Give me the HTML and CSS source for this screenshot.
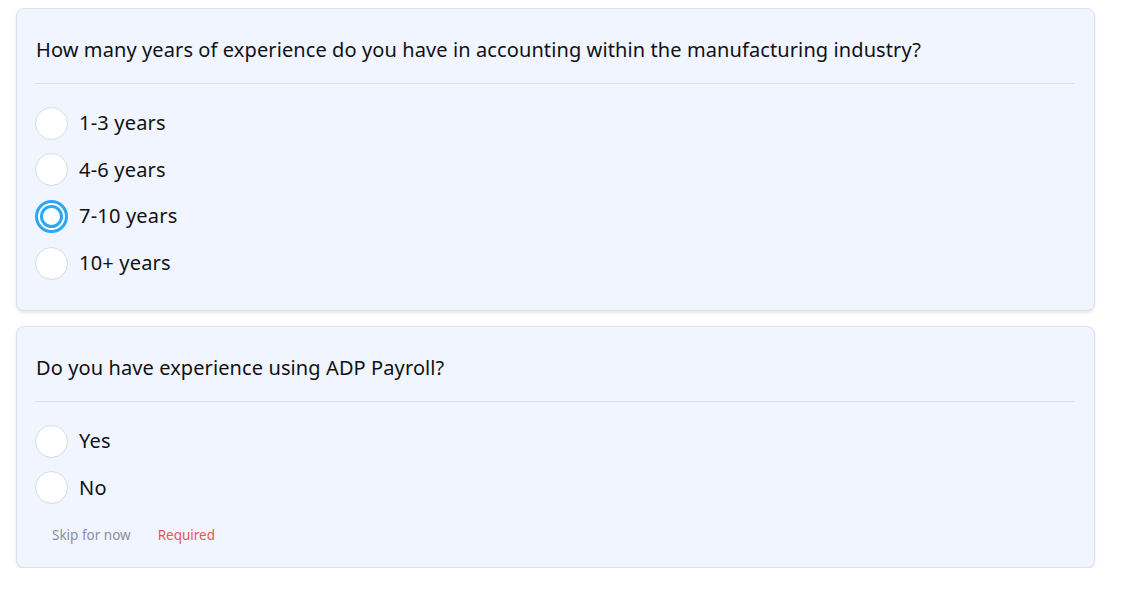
FILE: index.html
```html
<!DOCTYPE html>
<html lang="en">
<head>
<meta charset="utf-8">
<title>Questions</title>
<link rel="stylesheet" href="styles.css">
</head>
<body>
<main class="page">
  <section class="card">
    <h2 class="question">How many years of experience do you have in accounting within the manufacturing industry?</h2>
    <div class="options">
      <label class="option"><span class="radio"></span><span class="label">1-3 years</span></label>
      <label class="option"><span class="radio"></span><span class="label">4-6 years</span></label>
      <label class="option"><span class="radio checked"></span><span class="label">7-10 years</span></label>
      <label class="option"><span class="radio"></span><span class="label">10+ years</span></label>
    </div>
  </section>
  <section class="card card-footer">
    <h2 class="question">Do you have experience using ADP Payroll?</h2>
    <div class="options">
      <label class="option"><span class="radio"></span><span class="label">Yes</span></label>
      <label class="option"><span class="radio"></span><span class="label">No</span></label>
    </div>
    <div class="footer">
      <span class="skip">Skip for now</span>
      <span class="required">Required</span>
    </div>
  </section>
</main>
</body>
</html>
```
FILE: styles.css
```css
* { box-sizing: border-box; }
html, body { margin: 0; padding: 0; background: #ffffff; }
body {
  font-family: "Noto Sans", "Open Sans", "Liberation Sans", sans-serif;
  color: #111114;
}
.page {
  padding: 8px 28px 0 16px;
  display: flex;
  flex-direction: column;
  gap: 15px;
}
.card {
  background: #f0f5ff;
  border: 1px solid #dde2ea;
  border-radius: 8px;
  box-shadow: 0 2px 3px rgba(0, 0, 0, 0.1);
  padding: 27px 19px 31px 18px;
}
.card-footer { padding-bottom: 22px; }
.question {
  margin: 0;
  font-size: 20px;
  font-weight: 400;
  line-height: 28px;
  letter-spacing: 0.1px;
  padding: 0 0 19px 1px;
  border-bottom: 1px solid #dde1e8;
}
.options {
  display: flex;
  flex-direction: column;
  gap: 14.7px;
  margin-top: 23px;
}
.option {
  display: flex;
  align-items: center;
  gap: 11px;
  height: 32px;
}
.radio {
  width: 33px;
  height: 33px;
  border-radius: 50%;
  background: #ffffff;
  border: 1px solid #d6dae1;
  display: flex;
  align-items: center;
  justify-content: center;
  flex-shrink: 0;
}
.radio.checked {
  border: 3px solid #2ba7f3;
}
.radio.checked::after {
  content: "";
  width: 23px;
  height: 23px;
  border-radius: 50%;
  border: 3px solid #2ba7f3;
  box-sizing: border-box;
}
.label {
  font-size: 20px;
  line-height: 28px;
  letter-spacing: 0.2px;
}
.footer {
  display: flex;
  gap: 27px;
  margin-top: 21px;
  padding-left: 17px;
  font-size: 13.5px;
  line-height: 20px;
}
.skip { color: #8b909a; }
.required { color: #f05252; }
```
